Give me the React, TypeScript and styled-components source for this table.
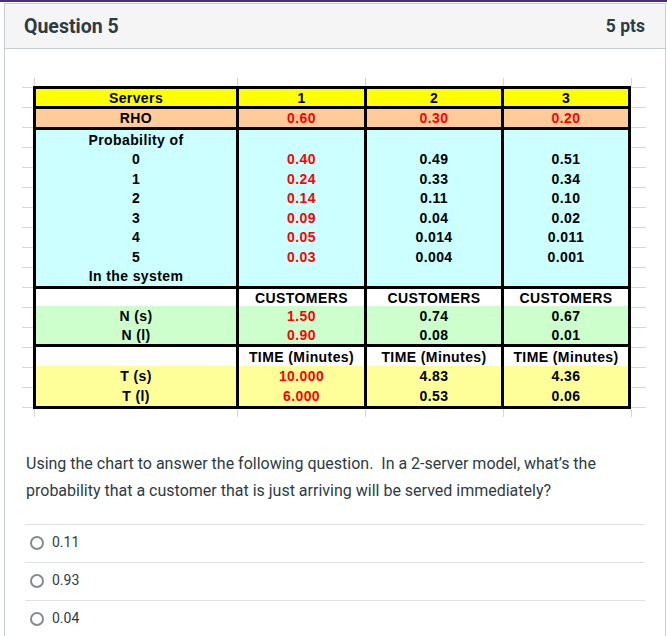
import React from 'react';
import styled, { createGlobalStyle } from 'styled-components';

const GlobalStyle = createGlobalStyle`
  body {
    margin: 0;
    background: #fff;
    font-family: Roboto, "Noto Sans", sans-serif;
    color: #2d3b45;
  }
`;

const TopBar = styled.div`
  height: 2px;
  background: #4f2c83;
`;

const Card = styled.section`
  margin: 1px 1px 0 4px;
  border: 1px solid #c7cdd1;
  border-bottom: none;
`;

const Header = styled.header`
  height: 44px;
  display: flex;
  align-items: center;
  justify-content: space-between;
  padding: 0 20px 0 19px;
  background: #f5f5f5;
  border-bottom: 1px solid #c7cdd1;
`;

const Title = styled.h2`
  margin: 0;
  font-size: 19.5px;
  font-weight: 700;
`;

const Points = styled.span`
  font-size: 17.5px;
  font-weight: 700;
`;

const Body = styled.div`
  padding: 29px 20px 0;
`;

const Sheet = styled.div`
  position: relative;
  box-sizing: border-box;
  width: 624px;
  margin-left: -3px;
  padding: 8px 15px 8px 11px;
`;

const Ticks = styled.svg`
  position: absolute;
  left: 0;
  top: 0;
  pointer-events: none;
`;

const Grid = styled.div`
  display: grid;
  grid-template-columns: 200px 125px 134px 124px;
  gap: 3px;
  width: max-content;
  background: #000;
  border: 3px solid #000;
`;

const Column = styled.div`
  display: flex;
  flex-direction: column;
`;

const Line = styled.div<{ $bg: string; $h: number; $red?: boolean }>`
  height: ${(p) => p.$h}px;
  display: flex;
  align-items: center;
  justify-content: center;
  background: ${(p) => p.$bg};
  color: ${(p) => (p.$red ? '#ff0000' : '#000')};
  font-family: "Liberation Sans", Arial, sans-serif;
  font-size: 14px;
  font-weight: 700;
  letter-spacing: 0.4px;
  white-space: nowrap;
`;

const Prompt = styled.p`
  margin: 33px 0 0 1px;
  font-size: 16px;
  line-height: 27px;
`;

const Options = styled.div`
  margin-top: 20px;
`;

const Option = styled.label`
  box-sizing: border-box;
  height: 38px;
  display: flex;
  align-items: center;
  gap: 8px;
  padding: 0 0 3px 5px;
  border-top: 1px solid #dfe3e5;
  font-size: 14px;
`;

const Radio = styled.span`
  box-sizing: border-box;
  width: 14px;
  height: 14px;
  margin-top: 2px;
  border-radius: 50%;
  border: 2px solid #848c92;
  background: #fff;
`;

const YELLOW = '#ffff00';
const PEACH = '#ffcc99';
const CYAN = '#ccffff';
const GREEN = '#ccffcc';
const PALE = '#ffff99';
const WHITE = '#ffffff';

interface ILine {
  h: number;
  bg: string;
  cells: string[];
  red?: number[];
}

const sections: ILine[][] = [
  [{ h: 17, bg: YELLOW, cells: ['Servers', '1', '2', '3'] }],
  [{ h: 18, bg: PEACH, cells: ['RHO', '0.60', '0.30', '0.20'], red: [1, 2, 3] }],
  [
    { h: 19.5, bg: CYAN, cells: ['Probability of', '', '', ''] },
    { h: 19.5, bg: CYAN, cells: ['0', '0.40', '0.49', '0.51'], red: [1] },
    { h: 19.5, bg: CYAN, cells: ['1', '0.24', '0.33', '0.34'], red: [1] },
    { h: 19.5, bg: CYAN, cells: ['2', '0.14', '0.11', '0.10'], red: [1] },
    { h: 19.5, bg: CYAN, cells: ['3', '0.09', '0.04', '0.02'], red: [1] },
    { h: 19.5, bg: CYAN, cells: ['4', '0.05', '0.014', '0.011'], red: [1] },
    { h: 19.5, bg: CYAN, cells: ['5', '0.03', '0.004', '0.001'], red: [1] },
    { h: 19.5, bg: CYAN, cells: ['In the system', '', '', ''] },
  ],
  [
    { h: 17, bg: WHITE, cells: ['', 'CUSTOMERS', 'CUSTOMERS', 'CUSTOMERS'] },
    { h: 19, bg: GREEN, cells: ['N (s)', '1.50', '0.74', '0.67'], red: [1] },
    { h: 19, bg: GREEN, cells: ['N (l)', '0.90', '0.08', '0.01'], red: [1] },
  ],
  [
    { h: 19, bg: WHITE, cells: ['', 'TIME (Minutes)', 'TIME (Minutes)', 'TIME (Minutes)'] },
    { h: 20, bg: PALE, cells: ['T (s)', '10.000', '4.83', '4.36'], red: [1] },
    { h: 20, bg: PALE, cells: ['T (l)', '6.000', '0.53', '0.06'], red: [1] },
  ],
];

const tickX = [12, 215, 343, 481, 609];
const tickY = Array.from({ length: 17 }, (_, i) => 9 + i * 20);

const SheetLines = () => (
  <Ticks width="624" height="339" viewBox="0 0 624 339">
    <g stroke="#d6d6d6" strokeWidth="1">
      {tickX.map((x) => (
        <React.Fragment key={x}>
          <line x1={x + 0.5} y1="0" x2={x + 0.5} y2="8" />
          <line x1={x + 0.5} y1="331" x2={x + 0.5} y2="339" />
        </React.Fragment>
      ))}
      {tickY.map((y) => (
        <React.Fragment key={y}>
          <line x1="0" y1={y + 0.5} x2="11" y2={y + 0.5} />
          <line x1="609" y1={y + 0.5} x2="624" y2={y + 0.5} />
        </React.Fragment>
      ))}
    </g>
  </Ticks>
);

const options = ['0.11', '0.93', '0.04'];

const App = () => {
  return (
    <>
      <GlobalStyle />
      <TopBar />
      <Card>
        <Header>
          <Title>Question 5</Title>
          <Points>5 pts</Points>
        </Header>
        <Body>
          <Sheet>
            <SheetLines />
            <Grid>
              {sections.map((lines, s) =>
                [0, 1, 2, 3].map((c) => (
                  <Column key={`${s}-${c}`}>
                    {lines.map((line, i) => (
                      <Line key={i} $bg={line.bg} $h={line.h} $red={line.red?.includes(c)}>
                        {line.cells[c]}
                      </Line>
                    ))}
                  </Column>
                ))
              )}
            </Grid>
          </Sheet>
          <Prompt>
            Using the chart to answer the following question.&nbsp; In a 2-server model, what’s the
            probability that a customer that is just arriving will be served immediately?
          </Prompt>
          <Options>
            {options.map((o) => (
              <Option key={o}>
                <Radio />
                {o}
              </Option>
            ))}
          </Options>
        </Body>
      </Card>
    </>
  );
};

export default App;
